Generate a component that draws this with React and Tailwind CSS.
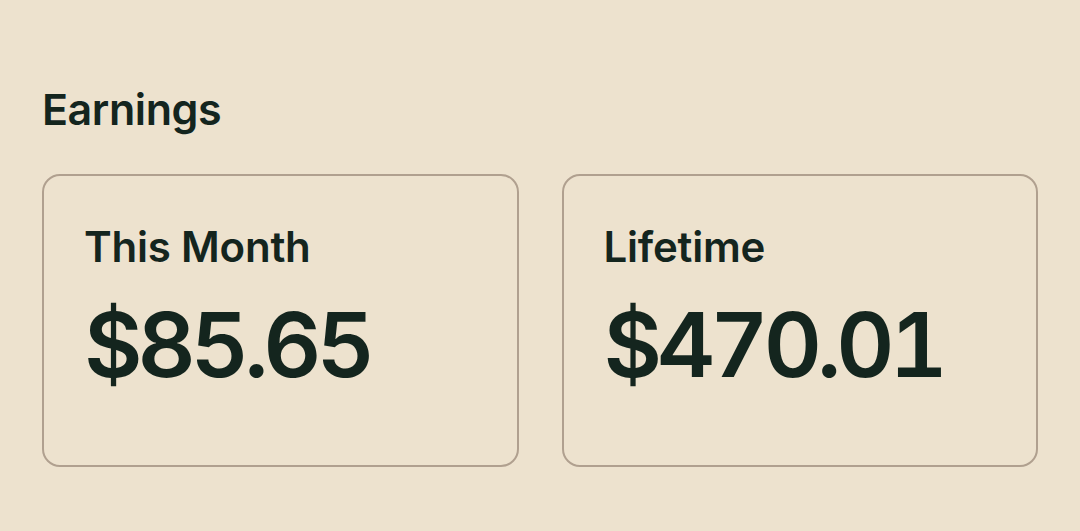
export default function App() {
  const cards = [
    { label: 'This Month', value: '$85.65' },
    { label: 'Lifetime', value: '$470.01' },
  ]
  return (
    <div className="min-h-screen w-full bg-[#ede2ce] text-[#14251e] px-[42px] pt-[81px]" style={{ fontFamily: 'Inter, "Noto Sans", sans-serif' }}>
      <h2 className="text-[43px] leading-[57px] font-semibold tracking-[-0.01em]">Earnings</h2>
      <div className="mt-[36px] grid grid-cols-2 gap-[43px]">
        {cards.map(card => (
          <div key={card.label} className="h-[293px] rounded-[18px] border-2 border-[#b0a08f] px-[40px] pt-[43px]">
            <p className="text-[42px] leading-[56px] font-semibold tracking-[-0.005em]">{card.label}</p>
            <p className="mt-[20px] text-[90px] leading-[100px] font-semibold tracking-[-0.055em] tabular-nums">{card.value}</p>
          </div>
        ))}
      </div>
    </div>
  )
}
